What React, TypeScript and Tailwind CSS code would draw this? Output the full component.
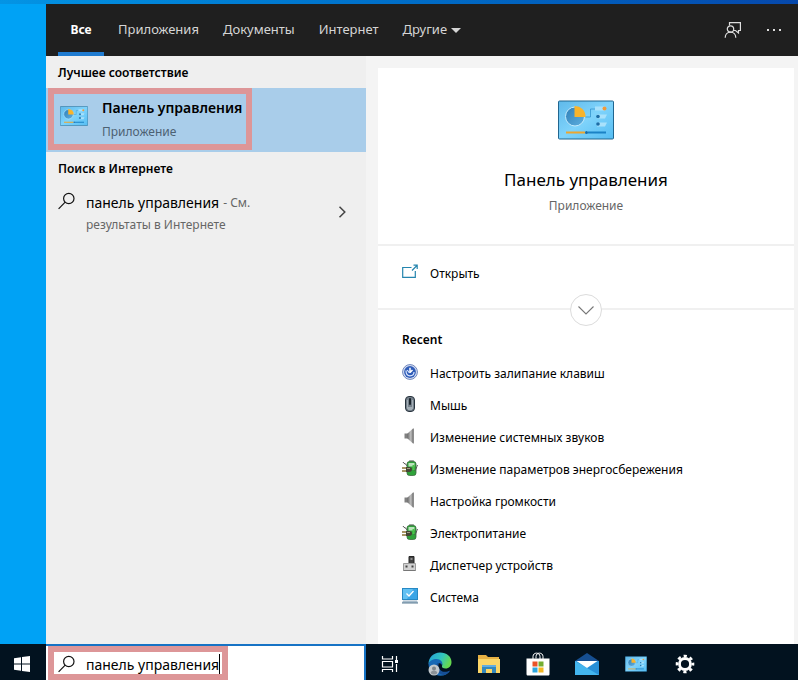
import { useState } from 'react'
import type { ReactNode } from 'react'

const tabs = ['Приложения', 'Документы', 'Интернет']

function ControlPanelIcon({ className }: { className?: string }) {
  return (
    <svg viewBox="0 0 56 39" className={className} aria-hidden="true">
      <defs>
        <linearGradient id="cp-bg" x1="0" y1="0" x2="1" y2="1">
          <stop offset="0" stopColor="#5fb9ea" />
          <stop offset="0.5" stopColor="#7fd3fb" />
          <stop offset="1" stopColor="#55bdf3" />
        </linearGradient>
        <linearGradient id="cp-pie" x1="0" y1="0" x2="1" y2="1">
          <stop offset="0" stopColor="#2f7fb8" />
          <stop offset="1" stopColor="#5fb0e0" />
        </linearGradient>
      </defs>
      <rect x="0.5" y="0.5" width="55" height="38" rx="1" fill="url(#cp-bg)" stroke="#21668f" />
      <circle cx="17" cy="16" r="9.5" fill="url(#cp-pie)" stroke="#c4ebfd" />
      <path d="M16.500 16.500V5.500A10.500 10.500 0 0 1 27.500 16.500z" fill="#f8b42c" />
      <path d="M27.500 16.500H32.500V8.500H37" fill="none" stroke="#3596cf" strokeWidth="0.8" />
      <path d="M37 6h10v4H37zM39 14h10l-2 4h-8zM39 22h10l-2 4h-8z" fill="#a9e1fb" />
      <circle cx="46.500" cy="8" r="2" fill="#f09a3a" />
      <circle cx="40" cy="16" r="1.800" fill="#1d6ca5" />
      <circle cx="40" cy="23.500" r="1.800" fill="#1d6ca5" />
      <path d="M8 32h19" stroke="#eda62f" strokeWidth="2" />
      <path d="M30 32h18" stroke="#1b82c5" strokeWidth="2" />
      <circle cx="28.500" cy="32" r="1.500" fill="#1a6ba6" />
    </svg>
  )
}

function SearchIcon() {
  return (
    <svg viewBox="0 0 18 18" className="size-4.5 shrink-0" fill="none" stroke="#111" strokeWidth="1.2" aria-hidden="true">
      <circle cx="10.800" cy="6.500" r="5.200" />
      <path d="M7.200 10.200L0.600 16.800" />
    </svg>
  )
}

function StickyKeysIcon() {
  return (
    <svg viewBox="0 0 16 16" className="size-4" aria-hidden="true">
      <circle cx="8" cy="8" r="7.400" fill="#dce4f5" stroke="#6c83bb" />
      <circle cx="8" cy="8" r="5.900" fill="#2f5cb8" />
      <path d="M8 9V3.800M8 8.500l2.500-2.500" stroke="#fff" strokeWidth="1.500" />
      <path d="M4 6.500c0 4 2 5.300 4 5.300s4-1.300 4-3.800M5.200 6l2.300 3" fill="none" stroke="#dbe7ff" strokeWidth="1.200" />
    </svg>
  )
}

function MouseIcon() {
  return (
    <svg viewBox="0 0 16 16" className="size-4" aria-hidden="true">
      <rect x="3.500" y="0.500" width="9" height="15" rx="3.500" fill="#76818b" stroke="#27333d" />
      <path d="M5.500 4v9M10.500 4v9" stroke="#a3aeb6" />
      <path d="M6 11h4v3H6z" fill="#a3aeb6" />
      <rect x="7" y="2" width="2" height="7" rx="1" fill="#1b252d" />
    </svg>
  )
}

function SpeakerIcon() {
  return (
    <svg viewBox="0 0 16 16" className="size-4" aria-hidden="true">
      <defs>
        <linearGradient id="speaker" x1="0" x2="1">
          <stop offset="0" stopColor="#6c6c6c" />
          <stop offset="0.6" stopColor="#c0c0c0" />
          <stop offset="1" stopColor="#777" />
        </linearGradient>
      </defs>
      <path d="M2.500 5.500h3.500v5H2.500z" fill="#808080" />
      <path d="M5.500 5.500L11 0.500v15L5.500 10.500z" fill="url(#speaker)" />
      <path d="M11.500 0.500v15" stroke="#8d8d8d" />
    </svg>
  )
}

function PowerIcon() {
  return (
    <svg viewBox="0 0 16 16" className="size-4" aria-hidden="true">
      <path d="M7.500 0.500h4v2h-4z" fill="#c9d4c9" stroke="#66776a" strokeWidth="0.600" />
      <rect x="5" y="1.500" width="9" height="14" rx="2.500" fill="#2fa33a" stroke="#3b6b3f" strokeWidth="0.800" />
      <path d="M6.500 3h6v3.500h-6z" fill="#b9e2ba" />
      <path d="M10.500 5h2v5h-2z" fill="#4cc44c" />
      <path d="M1 2c1 2.500 3 1 4 4M15.500 5c-1 2-1 4-3 6" fill="none" stroke="#555" />
      <path d="M4 7h3c2.500 0 3 1 3 2.500S9 12 7 12H4z" fill="#454535" />
      <path d="M5 8.500h3" stroke="#a09d80" />
      <path d="M0 8h4M0 11h4" stroke="#8a7433" strokeWidth="1.500" />
    </svg>
  )
}

function DeviceIcon() {
  return (
    <svg viewBox="0 0 16 16" className="size-4" aria-hidden="true">
      <path d="M7 0.500h5v7H7z" fill="#424242" stroke="#262626" />
      <path d="M8.500 2h2v2h-2z" fill="#8c8c8c" />
      <path d="M1.500 7.500h12v7h-12z" fill="#d2d2d2" stroke="#9b9b9b" />
      <path d="M3.500 9.500h2v2h-2zM9.500 9.500h2v2h-2z" fill="#444" />
      <path d="M1.500 14.500h12" stroke="#777" />
    </svg>
  )
}

function SystemIcon() {
  return (
    <svg viewBox="0 0 16 16" className="size-4" aria-hidden="true">
      <rect x="0.5" y="0.5" width="15" height="11" fill="#3aa5e6" stroke="#2789c4" />
      <path d="M1 1h10L5 11H1z" fill="#62c1f3" />
      <path d="M4.500 5.500l2.500 2.500 4.500-5" fill="none" stroke="#fff" strokeWidth="1.300" />
      <path d="M1 12.500h14l1 2.500H0z" fill="#a8bccb" />
      <path d="M0 15h16" stroke="#5b7d94" />
    </svg>
  )
}

const recent: { label: string; icon: ReactNode }[] = [
  { label: 'Настроить залипание клавиш', icon: <StickyKeysIcon /> },
  { label: 'Мышь', icon: <MouseIcon /> },
  { label: 'Изменение системных звуков', icon: <SpeakerIcon /> },
  { label: 'Изменение параметров энергосбережения', icon: <PowerIcon /> },
  { label: 'Настройка громкости', icon: <SpeakerIcon /> },
  { label: 'Электропитание', icon: <PowerIcon /> },
  { label: 'Диспетчер устройств', icon: <DeviceIcon /> },
  { label: 'Система', icon: <SystemIcon /> },
]

function Header() {
  return (
    <header className="flex h-13 items-center justify-between bg-[#1f1f1f] pr-4 pl-3 text-[13px] text-[#d5d5d5]">
      <nav className="flex h-full items-stretch">
        <button className="mr-3.5 flex w-11.5 items-center justify-center border-y-4 border-t-transparent border-b-[#1f7bd0] text-[12px] font-bold text-white">
          Все
        </button>
        <div className="flex items-center gap-6">
          {tabs.map((tab) => (
            <button key={tab}>{tab}</button>
          ))}
          <button className="flex items-center gap-1">
            Другие
            <svg viewBox="0 0 10 5" className="h-1.25 w-2.5" aria-hidden="true">
              <path d="M0 0h10L5 5z" fill="#d5d5d5" />
            </svg>
          </button>
        </div>
      </nav>
      <div className="flex items-center gap-6">
        <button aria-label="Отзыв">
          <svg viewBox="0 0 18 18" className="size-4.5" fill="none" stroke="#dedede" strokeWidth="1.200" aria-hidden="true">
            <path d="M5.500 4.500V1.600H16.400V9.500H14.500V12L11.500 9.500H10" />
            <circle cx="6.500" cy="8" r="3.200" />
            <path d="M1.200 16.800c0-3.400 2.300-5.600 5.300-5.600s5.300 2.200 5.300 5.600" />
          </svg>
        </button>
        <button aria-label="Параметры">
          <svg viewBox="0 0 16 4" className="h-1 w-4" fill="#dedede" aria-hidden="true">
            <path d="M1 1h2v2H1zM7 1h2v2H7zM13 1h2v2h-2z" />
          </svg>
        </button>
      </div>
    </header>
  )
}

function Results() {
  return (
    <section className="w-80 shrink-0 bg-[#efefef]">
      <h2 className="flex h-8 items-center px-3 pt-0.5 text-[12px] font-semibold">Лучшее соответствие</h2>
      <div className="relative">
        <button className="flex h-16 w-full items-start gap-3.5 bg-[#a9cdea] px-3.5 pt-2 text-left">
          <ControlPanelIcon className="mt-2.5 h-5 w-7 shrink-0" />
          <span>
            <span className="block text-[14px] leading-6 font-semibold">Панель управления</span>
            <span className="block text-[12px] leading-6 text-[#4d6173]">Приложение</span>
          </span>
        </button>
        <div className="pointer-events-none absolute top-0 left-0.5 h-15.5 w-51 border-6 border-[#dd9698]" />
      </div>
      <h2 className="flex h-8 items-center px-3 pt-0.5 text-[12px] font-semibold">Поиск в Интернете</h2>
      <button className="flex w-full items-start pt-2 pr-5 pl-3 text-left">
        <SearchIcon />
        <span className="ml-2.5 text-[12px] leading-5.5 text-[#666]">
          <span className="flex gap-1">
            <span className="text-[14px] text-black">панель управления</span>
            <span>- См.</span>
          </span>
          <span className="block">результаты в Интернете</span>
        </span>
        <svg viewBox="0 0 8 12" className="mt-3.5 ml-auto h-3 w-2" fill="none" stroke="#444" strokeWidth="1.500" aria-hidden="true">
          <path d="M1.500 0.800L6.800 6 1.500 11.200" />
        </svg>
      </button>
    </section>
  )
}

function Details() {
  return (
    <section className="min-w-0 flex-1 bg-[#f4f4f4] pt-3 pr-1 pl-3">
      <div className="h-full bg-white">
        <div className="flex h-44 flex-col items-center pt-8">
          <ControlPanelIcon className="h-10 w-14" />
          <h1 className="mt-7 text-[17px] leading-6">Панель управления</h1>
          <p className="mt-1 text-[12px] leading-5 text-[#666]">Приложение</p>
        </div>
        <div className="relative h-16.5 border-y-2 border-[#f0f0f0] px-6 pt-4.5">
          <a href="#open" className="flex items-start gap-3 text-[12px] leading-5">
            <svg viewBox="0 0 16 16" className="size-4" fill="none" stroke="#2585ae" strokeWidth="1.200" aria-hidden="true">
              <path d="M9.500 3.500H0.700V13.300H13.300V7M10 6.500L15 1.500M11.500 1.200H15.200V5" />
            </svg>
            Открыть
          </a>
          <button
            aria-label="Развернуть"
            className="absolute -bottom-4.5 left-1/2 flex size-8 -translate-x-1/2 items-center justify-center rounded-full border border-[#dcdcdc] bg-white"
          >
            <svg viewBox="0 0 16 9" className="h-2.25 w-4" fill="none" stroke="#777" strokeWidth="1.100" aria-hidden="true">
              <path d="M0.500 0.500L8 8l7.500-7.500" />
            </svg>
          </button>
        </div>
        <div className="px-6 pt-5">
          <h2 className="mb-2 text-[12px] leading-5 font-semibold">Recent</h2>
          <ul>
            {recent.map((item) => (
              <li key={item.label}>
                <a href="#recent" className="flex h-8 items-center gap-3 text-[12px]">
                  <span className="mb-1">{item.icon}</span>
                  {item.label}
                </a>
              </li>
            ))}
          </ul>
        </div>
      </div>
    </section>
  )
}

function Taskbar() {
  const [query, setQuery] = useState('панель управления')

  return (
    <footer className="flex h-9 items-stretch bg-[#02121f]">
      <button aria-label="Пуск" className="flex w-11.5 shrink-0 items-center justify-center pt-1 pr-0.5">
        <svg viewBox="0 0 16 16" className="size-4" fill="#fff" aria-hidden="true">
          <path d="M0 2.300L7 1.200V7.500H0zM8 1L16 0V7.500H8zM0 8.500H7V14.800L0 13.700zM8 8.500H16V16L8 14.900z" />
        </svg>
      </button>
      <div className="relative flex w-80 shrink-0 items-center border-t-2 border-r-2 border-[#1673c5] bg-white pt-0.5 pl-3">
        <label htmlFor="query">
          <SearchIcon />
        </label>
        <input
          id="query"
          aria-label="Поиск"
          value={query}
          onChange={(e) => setQuery(e.target.value)}
          className="ml-2.5 field-sizing-content text-[14px] text-black outline-none"
        />
        <span className="h-5 w-px bg-black" />
        <div className="pointer-events-none absolute top-0 left-0.5 h-8.5 w-45 border-6 border-[#dd9698]" />
      </div>
      <nav className="flex items-center gap-6.25 pt-1 pl-3.75">
        <button aria-label="Представление задач">
          <svg viewBox="0 0 18 16" className="h-4 w-4.5" fill="none" stroke="#fff" strokeWidth="1.200" aria-hidden="true">
            <path d="M1.500 0V3H11.500V0M1.500 5.500H11.500V11H1.500zM1.500 16V13.500H11.500V16M15.500 0V4M15.500 8V16" />
            <path d="M14 4h3v3h-3z" fill="#fff" stroke="none" />
          </svg>
        </button>
        <button aria-label="Microsoft Edge" className="ml-1">
          <svg viewBox="0 0 24 24" className="size-6" aria-hidden="true">
            <defs>
              <linearGradient id="edge-top" x1="0" x2="1" y2="0.4">
                <stop offset="0" stopColor="#249ddb" />
                <stop offset="0.6" stopColor="#32c5bd" />
                <stop offset="1" stopColor="#65d950" />
              </linearGradient>
            </defs>
            <path d="M0.500 12C0.500 5.500 5.500 0.500 12 0.500s11.500 4 11.500 9.500c0 4-2.500 6.500-6 6.500-2.500 0-4-1-3.500-2.500 1-2.500-1-5.500-5-5.500-4 0-7 1.500-8.500 3.500z" fill="url(#edge-top)" />
            <path d="M0.500 12C1.500 8.500 5 7 8.500 7c4 0 7 3 5.500 6.500-.5-2-2-2.800-3.500-2-3 2.500-1 7.500 3.500 8.500 3 .6 6 .3 8-1.300-2 3-5.500 5-9.500 5C6 23.700 0.500 18.500 0.500 12z" fill="#1768b5" />
            <path d="M9.500 11c-4 5 0 11.500 6.500 12 3-1 5-2.500 6-4.500-3 1.800-7.500 2-9.700-.5-2-2-2.500-4.500-1.300-6.500z" fill="#164f96" />
            <circle cx="6" cy="18" r="5.500" fill="#c3c9cd" />
            <circle cx="6" cy="16.500" r="2" fill="#7d858b" />
            <path d="M2.700 21c0-3.500 6.600-3.500 6.600 0-1.500 2-5 2-6.600 0z" fill="#8b9298" />
          </svg>
        </button>
        <button aria-label="Проводник">
          <svg viewBox="0 0 24 20" className="h-5 w-6" aria-hidden="true">
            <path d="M1 1h8l2 2h11v16H1z" fill="#e7b144" />
            <path d="M1 5h22v14H1z" fill="#fbd667" />
            <path d="M5 11h14v8h-4v-4H9v4H5z" fill="#3388bd" />
            <path d="M5 11h14v2H5z" fill="#62ade0" />
          </svg>
        </button>
        <button aria-label="Microsoft Store">
          <svg viewBox="0 0 24 24" className="size-6" aria-hidden="true">
            <path d="M7 7V4.500c0-4.500 7-4.500 7 0V7M10 6.500V4.500c0-4.500 7-4.500 7 0V7" fill="none" stroke="#fff" />
            <path d="M0.500 6.500h23V22c0 1-.5 1.500-1.500 1.500H2c-1 0-1.500-.5-1.500-1.500z" fill="#fff" />
            <path d="M6.500 9.500h5v5h-5z" fill="#ea5328" />
            <path d="M12.500 9.500h5v5h-5z" fill="#74ae31" />
            <path d="M6.500 15.500h5v5h-5z" fill="#2da6df" />
            <path d="M12.500 15.500h5v5h-5z" fill="#f3b723" />
          </svg>
        </button>
        <button aria-label="Почта">
          <svg viewBox="0 0 24 24" className="size-6" aria-hidden="true">
            <path d="M0 9L12 1l12 8v5H0z" fill="#164f91" />
            <path d="M0 9h24v14H0z" fill="#278fd7" />
            <path d="M0 9l24 14H0z" fill="#43b5ee" />
            <path d="M1.500 9h21L12 16z" fill="#fff" />
          </svg>
        </button>
        <button aria-label="Панель управления" className="flex w-6 justify-center">
          <ControlPanelIcon className="h-4 w-5.5" />
        </button>
        <button aria-label="Параметры системы" className="flex w-6 justify-center">
          <svg viewBox="0 0 20 20" className="size-5" fill="none" stroke="#fff" aria-hidden="true">
            <circle cx="10" cy="10" r="5.500" strokeWidth="2.800" />
            <circle cx="10" cy="10" r="8" strokeWidth="2.600" strokeDasharray="3.200 3.083" strokeDashoffset="1.600" />
          </svg>
        </button>
      </nav>
    </footer>
  )
}

export default function App() {
  return (
    <div className="flex min-h-screen flex-col bg-[#00a2f5] font-['Noto_Sans','Open_Sans',sans-serif] text-black">
      <div className="h-1 bg-linear-to-r from-[#0494e4] to-[#0648ac]" />
      <main className="ml-11.5 flex flex-1 flex-col">
        <Header />
        <div className="flex flex-1">
          <Results />
          <Details />
        </div>
      </main>
      <Taskbar />
    </div>
  )
}
